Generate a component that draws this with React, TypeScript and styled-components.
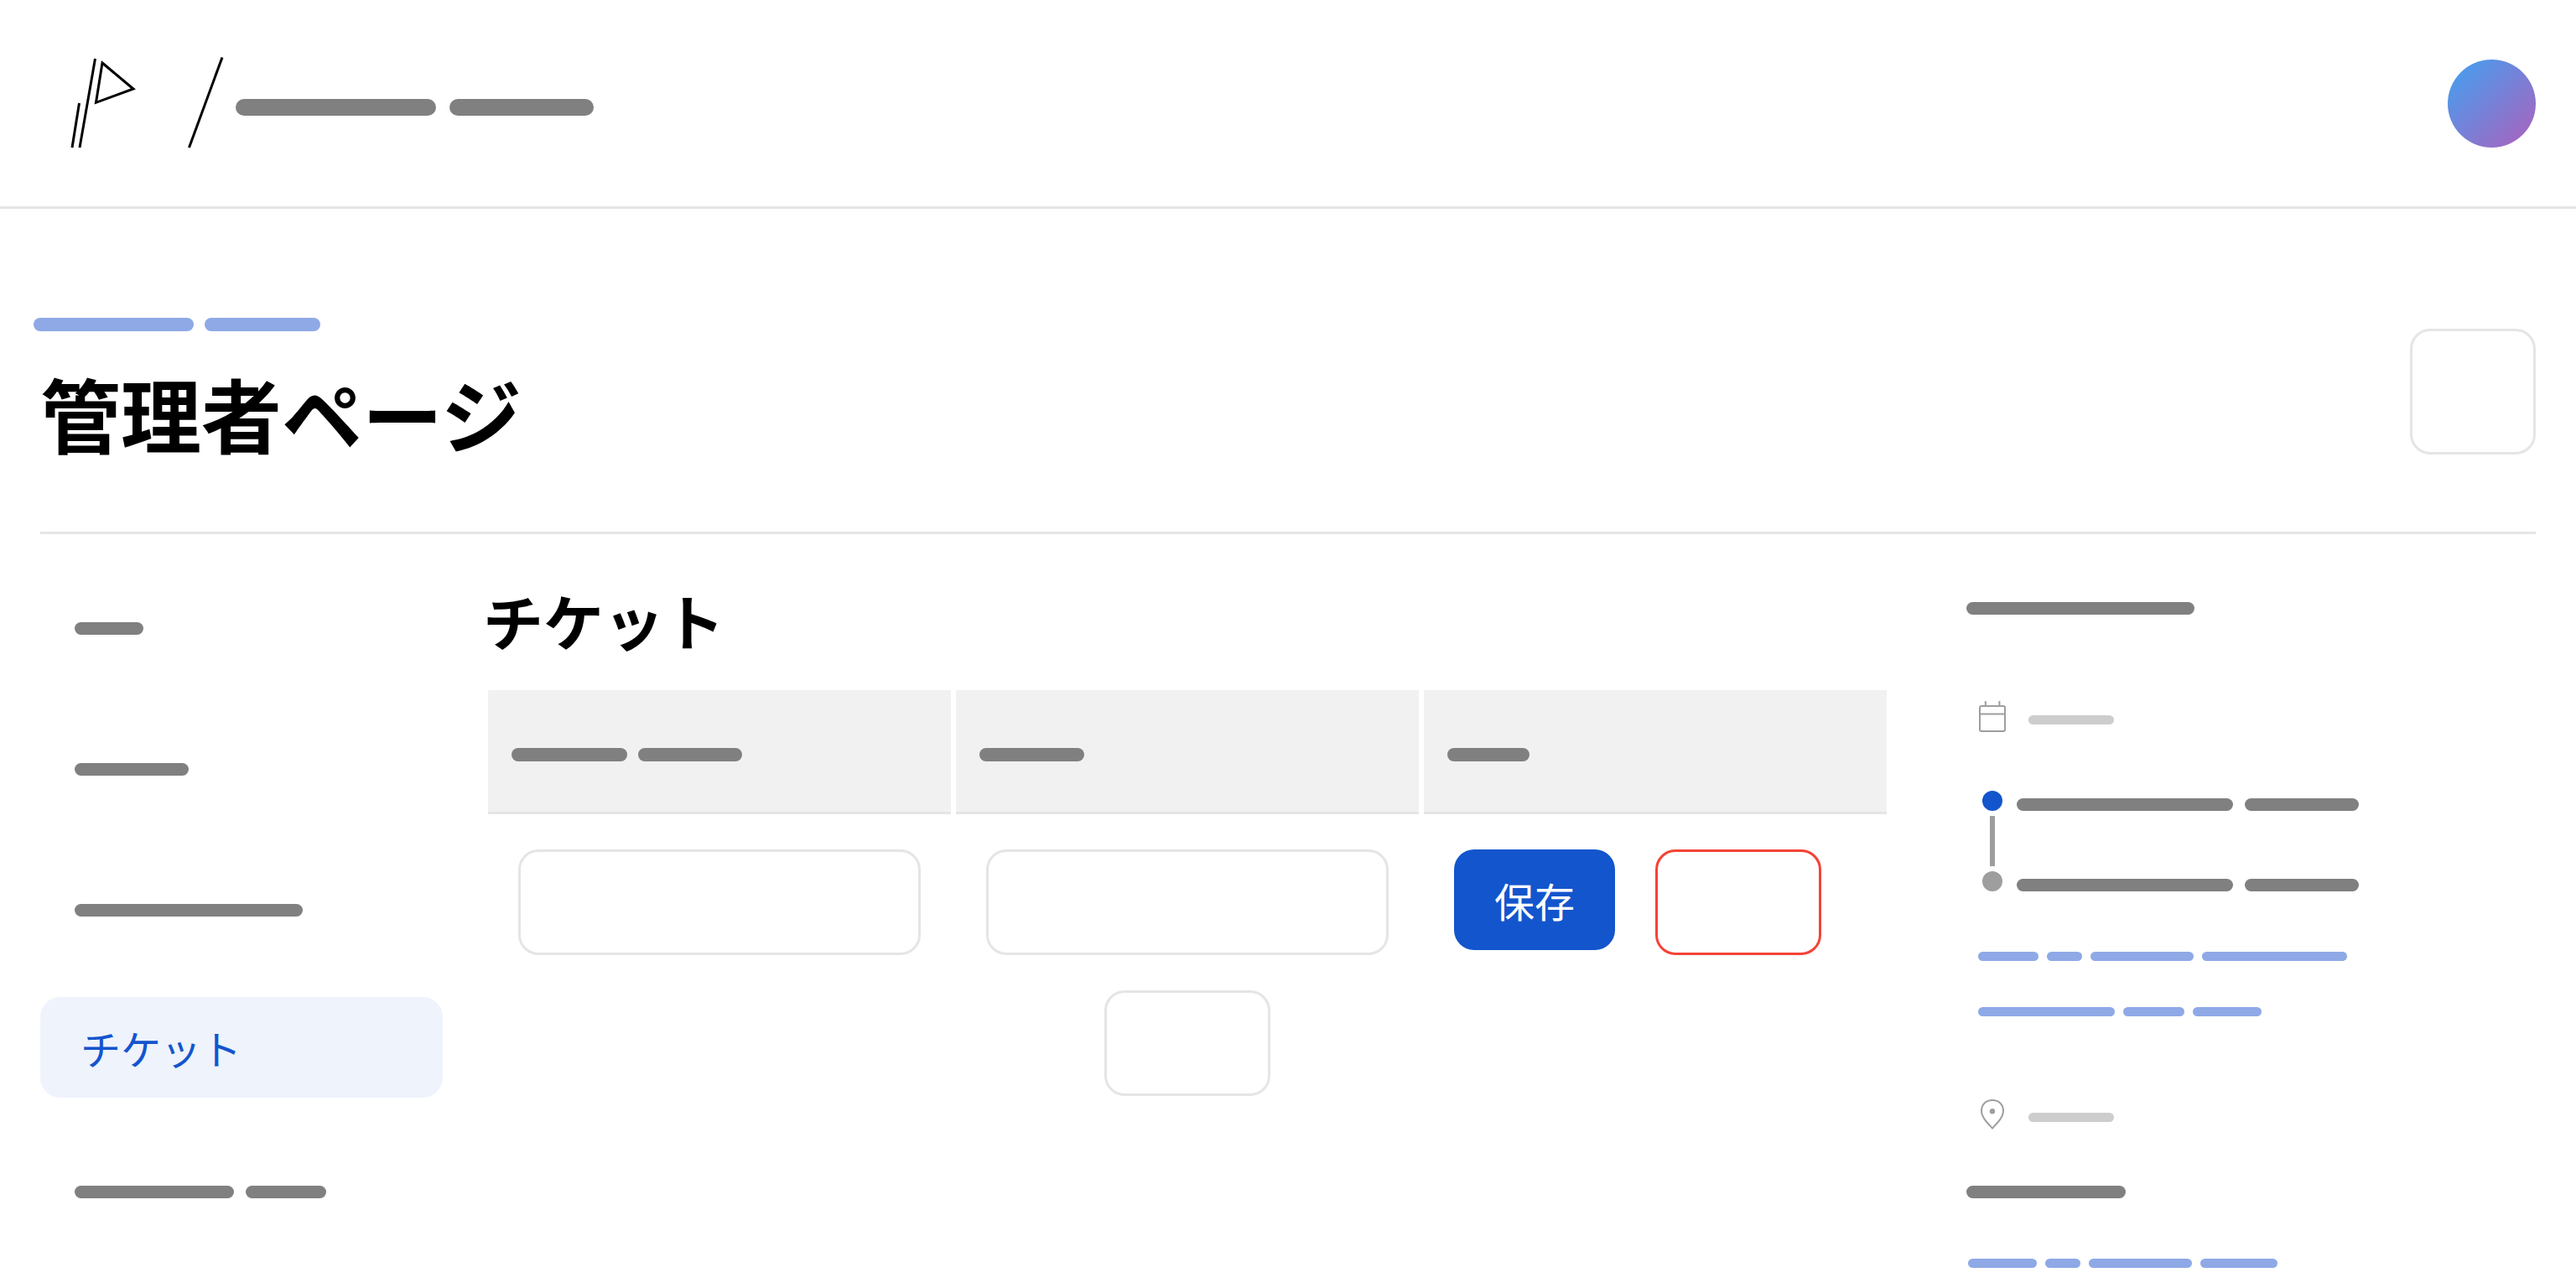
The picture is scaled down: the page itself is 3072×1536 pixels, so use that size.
import React from "react";
import styled, { createGlobalStyle, css } from "styled-components";

const color = {
  line: "#e5e5e5",
  primary: "#1355cc",
  primarySoft: "#eef3fc",
  danger: "#f44336",
  icon: "#9e9e9e",
};

const GlobalStyle = createGlobalStyle`
  *, *::before, *::after { box-sizing: border-box; }
  body {
    margin: 0;
    background: #fff;
    color: #000;
    font-family: "Noto Sans CJK JP", "Noto Sans", sans-serif;
    font-size: 48px;
    line-height: 72px;
  }
  h1, h2, ul, ol { margin: 0; padding: 0; }
  ul, ol { list-style: none; }
  button, input { font: inherit; color: inherit; }
`;

/* ---------- skeleton words ---------- */

type Size = "s" | "m" | "l" | "xl";
type Tone = "grey" | "light" | "blue";

const sizes = {
  s: { height: 11, gap: 10, outset: 5 },
  m: { height: 15, gap: 14, outset: 7 },
  l: { height: 16, gap: 13, outset: 8 },
  xl: { height: 20, gap: 16, outset: 7 },
};
const tones = { grey: "#808080", light: "#cdcdcd", blue: "#8ea9e6" };

const WordRow = styled.span<{ $size: Size }>`
  display: flex;
  padding-top: ${(p) => (p.$size === "xl" ? 10 : 8)}px;
  gap: ${(p) => sizes[p.$size].gap}px;
  margin-left: -${(p) => sizes[p.$size].outset}px;
`;

const Word = styled.span<{ $size: Size; $tone: Tone; $width: number }>`
  flex: none;
  width: ${(p) => p.$width}px;
  height: ${(p) => sizes[p.$size].height}px;
  border-radius: 10px;
  background: ${(p) => tones[p.$tone]};
`;

function Words({ size = "m", tone = "grey", widths }: { size?: Size; tone?: Tone; widths: number[] }) {
  return (
    <WordRow $size={size} aria-hidden="true">
      {widths.map((w, i) => (
        <Word key={i} $size={size} $tone={tone} $width={w} />
      ))}
    </WordRow>
  );
}

/* ---------- header ---------- */

const Header = styled.header`
  display: flex;
  align-items: center;
  justify-content: space-between;
  height: 249px;
  padding: 0 48px;
  border-bottom: 3px solid ${color.line};
`;

const Brand = styled.div`
  display: flex;
  align-items: center;
`;

const LogoLink = styled.a`
  display: flex;
  color: #000;
`;

const ProjectLink = styled.a`
  display: flex;
  padding-left: 6px;
`;

const Avatar = styled.button`
  width: 105px;
  height: 105px;
  padding: 0;
  border: 0;
  border-radius: 50%;
  background: linear-gradient(135deg, #3fa2f2, #ae60bc);
`;

/* ---------- page title ---------- */

const Hero = styled.section`
  display: flex;
  align-items: center;
  justify-content: space-between;
  margin: 0 48px;
  padding: 120px 0 70px;
  border-bottom: 3px solid ${color.line};
`;

const Crumb = styled.a`
  display: flex;
  padding: 2px 0 25px;
`;

const PageTitle = styled.h1`
  font-size: 96px;
  font-weight: 700;
  line-height: 144px;
`;

const outline = css`
  border: 3px solid ${color.line};
  border-radius: 24px;
  background: transparent;
`;

const SquareButton = styled.button`
  ${outline}
  width: 150px;
  height: 150px;
`;

/* ---------- body ---------- */

const Columns = styled.div`
  display: grid;
  grid-template-columns: 2fr 7fr 3fr;
  gap: 48px;
  padding: 48px 48px 0;
  align-items: start;
`;

const NavList = styled.ul`
  display: grid;
  gap: 48px;
`;

const NavLink = styled.a<{ $active?: boolean }>`
  display: flex;
  align-items: center;
  height: 120px;
  padding: 0 48px;
  border-radius: 24px;
  color: ${color.primary};
  text-decoration: none;
  background: ${(p) => (p.$active ? color.primarySoft : "transparent")};
`;

const SectionTitle = styled.h2`
  margin-bottom: 24px;
  font-size: 72px;
  font-weight: 700;
  line-height: 108px;
`;

const Table = styled.table`
  width: 100%;
  table-layout: fixed;
  border-collapse: separate;
  border-spacing: 6px;
`;

const HeadCell = styled.th`
  height: 148px;
  padding: 0 36px;
  background: #f1f1f1;
  border-bottom: 3px solid ${color.line};
  vertical-align: middle;
`;

const Cell = styled.td`
  padding: 36px;
  vertical-align: top;
`;

const FooterCell = styled.td`
  padding: 0;
`;

const TextInput = styled.input`
  ${outline}
  display: block;
  width: 100%;
  height: 126px;
  padding: 0 36px;
`;

const Actions = styled.div`
  display: flex;
  align-items: flex-start;
  gap: 48px;
`;

const PrimaryButton = styled.button`
  height: 120px;
  padding: 0 48px;
  border: 0;
  border-radius: 24px;
  background: ${color.primary};
  color: #fff;
`;

const OutlineButton = styled.button<{ $danger?: boolean }>`
  ${outline}
  display: block;
  width: 198px;
  height: 126px;
  ${(p) => p.$danger && `border-color: ${color.danger};`}
`;

const Centered = styled.div`
  display: flex;
  justify-content: center;
`;

/* ---------- aside ---------- */

const Aside = styled.aside`
  display: flex;
  flex-direction: column;
  padding-left: 48px;
`;

const AsideTitle = styled.div`
  display: flex;
  align-items: center;
  height: 72px;
`;

const Group = styled.section<{ $space: number }>`
  margin-top: ${(p) => p.$space}px;
`;

const GroupLabel = styled.div`
  display: flex;
  align-items: center;
  gap: 24px;
  height: 66px;
  color: ${color.icon};
`;

const Timeline = styled.div`
  display: flex;
  gap: 12px;
  margin-top: 32px;
`;

const Rail = styled.div`
  display: flex;
  flex-direction: column;
  align-items: center;
  gap: 6px;
  width: 48px;
  padding-top: 24px;
`;

const Dot = styled.span<{ $active?: boolean }>`
  width: 24px;
  height: 24px;
  border-radius: 50%;
  background: ${(p) => (p.$active ? color.primary : color.icon)};
`;

const Connector = styled.span`
  width: 6px;
  height: 60px;
  background: ${color.icon};
`;

const Dates = styled.ol`
  display: grid;
  gap: 24px;
`;

const DateItem = styled.li`
  display: flex;
  align-items: center;
  height: 72px;
`;

const Links = styled.div<{ $indent?: boolean }>`
  margin-top: 16px;
  padding-left: ${(p) => (p.$indent ? 12 : 0)}px;
`;

const SmallLink = styled.a`
  display: flex;
  align-items: center;
  height: 66px;
`;

const Place = styled(AsideTitle)`
  margin-top: 20px;
`;

/* ---------- drawings ---------- */

const Logo = () => (
  <svg width="162" height="120" viewBox="0 0 162 120" fill="none" stroke="currentColor" strokeWidth="3" aria-hidden="true">
    <path d="M65.5 7 47 113M46.500 60 38 113M74 12 111 43 66.500 59.300z" />
  </svg>
);

const Slash = () => (
  <svg width="72" height="120" viewBox="0 0 72 120" fill="none" stroke="currentColor" strokeWidth="3" aria-hidden="true">
    <path d="M55 5.500 15.500 113" />
  </svg>
);

const CalendarIcon = () => (
  <svg width="48" height="48" viewBox="0 0 48 48" fill="none" stroke="currentColor" strokeWidth="2" aria-hidden="true">
    <rect x="9" y="12" width="30" height="30" rx="2" />
    <path d="M9 21.500h30M15.800 6v6M32.400 6v6" />
  </svg>
);

const PinIcon = () => (
  <svg width="48" height="48" viewBox="0 0 48 48" fill="none" stroke="currentColor" strokeWidth="2" aria-hidden="true">
    <path d="M24 41.500C18.500 35.500 11 28.500 11 20.800C11 13 16.500 8 24 8S37 13 37 20.800C37 28.500 29.500 35.500 24 41.500z" />
    <circle cx="24" cy="21.300" r="3.200" fill="currentColor" stroke="none" />
  </svg>
);

/* ---------- page ---------- */

const navItems: { label: string; widths?: number[] }[] = [
  { label: "情報", widths: [82] },
  { label: "セッション", widths: [136] },
  { label: "参加者", widths: [272] },
  { label: "チケット" },
  { label: "設定", widths: [190, 96] },
];

const columns = [[138, 124], [125], [98]];

export default function App() {
  return (
    <>
      <GlobalStyle />
      <Header>
        <Brand>
          <LogoLink href="#home" aria-label="ホーム">
            <Logo />
          </LogoLink>
          <Slash />
          <ProjectLink href="#project" aria-label="プロジェクト">
            <Words size="xl" widths={[239, 172]} />
          </ProjectLink>
        </Brand>
        <Avatar type="button" aria-label="アカウント" />
      </Header>

      <main>
        <Hero>
          <div>
            <Crumb href="#project" aria-label="戻る">
              <Words size="l" tone="blue" widths={[191, 138]} />
            </Crumb>
            <PageTitle>管理者ページ</PageTitle>
          </div>
          <SquareButton type="button" aria-label="メニュー" />
        </Hero>

        <Columns>
          <nav aria-label="管理">
            <NavList>
              {navItems.map((item) => (
                <li key={item.label}>
                  <NavLink
                    href="#nav"
                    $active={!item.widths}
                    aria-current={item.widths ? undefined : "page"}
                    aria-label={item.widths ? item.label : undefined}
                  >
                    {item.widths ? <Words widths={item.widths} /> : item.label}
                  </NavLink>
                </li>
              ))}
            </NavList>
          </nav>

          <section>
            <SectionTitle>チケット</SectionTitle>
            <Table>
              <thead>
                <tr>
                  {columns.map((widths, i) => (
                    <HeadCell key={i} scope="col">
                      <Words size="l" widths={widths} />
                    </HeadCell>
                  ))}
                </tr>
              </thead>
              <tbody>
                <tr>
                  <Cell>
                    <TextInput type="text" aria-label="チケット名" />
                  </Cell>
                  <Cell>
                    <TextInput type="text" aria-label="価格" />
                  </Cell>
                  <Cell>
                    <Actions>
                      <PrimaryButton type="button">保存</PrimaryButton>
                      <OutlineButton type="button" $danger aria-label="削除" />
                    </Actions>
                  </Cell>
                </tr>
                <tr>
                  <FooterCell colSpan={3}>
                    <Centered>
                      <OutlineButton type="button" aria-label="追加" />
                    </Centered>
                  </FooterCell>
                </tr>
              </tbody>
            </Table>
          </section>

          <Aside>
            <AsideTitle>
              <Words widths={[272]} />
            </AsideTitle>
            <Group $space={64}>
              <GroupLabel>
                <CalendarIcon />
                <Words size="s" tone="light" widths={[102]} />
              </GroupLabel>
              <Timeline>
                <Rail aria-hidden="true">
                  <Dot $active />
                  <Connector />
                  <Dot />
                </Rail>
                <Dates>
                  <DateItem>
                    <Words widths={[258, 136]} />
                  </DateItem>
                  <DateItem>
                    <Words widths={[258, 136]} />
                  </DateItem>
                </Dates>
              </Timeline>
              <Links $indent>
                <SmallLink href="#google-calendar" aria-label="カレンダーに追加">
                  <Words size="s" tone="blue" widths={[72, 42, 123, 173]} />
                </SmallLink>
                <SmallLink href="#calendar-file" aria-label="カレンダーファイル">
                  <Words size="s" tone="blue" widths={[163, 73, 82]} />
                </SmallLink>
              </Links>
            </Group>
            <Group $space={60}>
              <GroupLabel>
                <PinIcon />
                <Words size="s" tone="light" widths={[102]} />
              </GroupLabel>
              <Place>
                <Words widths={[190]} />
              </Place>
              <Links>
                <SmallLink href="#map" aria-label="地図を開く">
                  <Words size="s" tone="blue" widths={[82, 42, 123, 92]} />
                </SmallLink>
              </Links>
            </Group>
          </Aside>
        </Columns>
      </main>
    </>
  );
}
